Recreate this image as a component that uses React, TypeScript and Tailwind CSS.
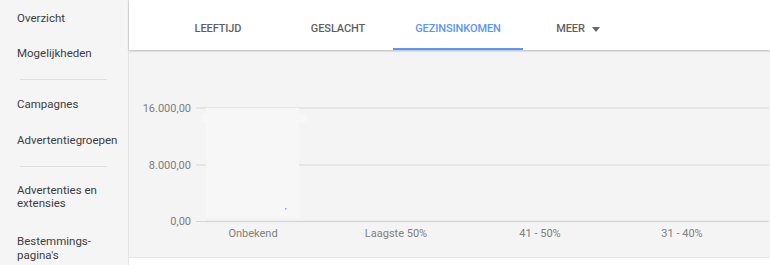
import React from 'react';

const navGroups = [
  ['Overzicht', 'Mogelijkheden'],
  ['Campagnes', 'Advertentiegroepen'],
];

const tabs = ['LEEFTIJD', 'GESLACHT', 'GEZINSINKOMEN', 'MEER'];

const categories = [
  { label: 'Onbekend', x: 124 },
  { label: 'Laagste 50%', x: 267 },
  { label: '41 - 50%', x: 411 },
  { label: '31 - 40%', x: 553 },
];

const yTicks = [
  { label: '16.000,00', y: 56 },
  { label: '8.000,00', y: 113 },
];

function Sidebar() {
  return (
    <aside className="w-[129px] shrink-0 bg-[#f5f5f5] border-r border-[#e4e4e4] pl-[17px] pt-[11px] text-[11.5px] leading-[14px] text-[#3d3d3d]">
      <div className="h-[14px]">{navGroups[0][0]}</div>
      <div className="mt-[21px] h-[14px]">{navGroups[0][1]}</div>
      <div className="mt-[19px] ml-[3px] w-[87px] h-px bg-[#e0e0e0]" />
      <div className="mt-[17px] h-[14px]">{navGroups[1][0]}</div>
      <div className="mt-[22px] h-[14px]">{navGroups[1][1]}</div>
      <div className="mt-[19px] ml-[3px] w-[87px] h-px bg-[#e0e0e0]" />
      <div className="mt-[17px] leading-[13px]">
        Advertenties en
        <br />
        extensies
      </div>
      <div className="mt-[24px] leading-[14px]">
        Bestemmings-
        <br />
        pagina's
      </div>
    </aside>
  );
}

function Tabs() {
  return (
    <div className="relative z-10 h-[50px] bg-white shadow-[0_1px_2px_rgba(0,0,0,0.25)] flex pl-[29px]">
      {tabs.map((t) => {
        const active = t === 'GEZINSINKOMEN';
        return (
          <div
            key={t}
            className={`relative w-[120px] flex items-center justify-center text-[11px] font-medium tracking-[-0.1px] ${
              active ? 'text-[#5b96f4]' : 'text-[#5f5f5f]'
            }`}
          >
            <span className="flex items-center gap-[7px] pt-[9px]">
              {t}
              {t === 'MEER' && (
                <span className="w-0 h-0 border-l-[4px] border-r-[4px] border-t-[5px] border-l-transparent border-r-transparent border-t-[#666]" />
              )}
            </span>
            {active && (
              <div className="absolute bottom-0 left-1/2 -translate-x-1/2 w-[130px] h-[2px] bg-[#5b96f4]" />
            )}
          </div>
        );
      })}
    </div>
  );
}

function Chart() {
  return (
    <svg width="640" height="205" className="block" style={{ fontFamily: 'Roboto, sans-serif' }}>
      {yTicks.map((t) => (
        <g key={t.label}>
          <text x="62" y={t.y + 4} textAnchor="end" fontSize="11" fill="#7d7d7d">
            {t.label}
          </text>
          <line x1="67" x2="77" y1={t.y} y2={t.y} stroke="#d6d6d6" strokeWidth="1" />
          <line x1="77" x2="640" y1={t.y} y2={t.y} stroke="#e2e2e2" strokeWidth="1.5" />
        </g>
      ))}
      <text x="62" y="173" textAnchor="end" fontSize="11" fill="#7d7d7d">
        0,00
      </text>
      <line x1="67" x2="77" y1="169.5" y2="169.5" stroke="#d6d6d6" strokeWidth="1" />
      <line x1="77" x2="640" y1="169.5" y2="169.5" stroke="#d3d6dc" strokeWidth="1.5" />
      <rect x="72" y="61" width="106" height="10" rx="5" fill="#f7f7f7" />
      <rect x="77" y="56" width="93" height="110" fill="#f7f7f7" />
      <rect x="156" y="156" width="1.5" height="1.5" fill="#7aa6ee" />
      {categories.map((c) => (
        <text key={c.label} x={c.x} y="185" textAnchor="middle" fontSize="11" fill="#808080">
          {c.label}
        </text>
      ))}
    </svg>
  );
}

export default function App() {
  return (
    <div className="w-[770px] h-[265px] overflow-hidden flex bg-white font-['Roboto',sans-serif]">
      <Sidebar />
      <main className="flex-1 flex flex-col">
        <Tabs />
        <div className="bg-[#f4f4f4] pt-[2px] h-[207px]">
          <Chart />
        </div>
        <div className="flex-1 bg-white border-t border-[#e6e6e6]" />
      </main>
    </div>
  );
}
